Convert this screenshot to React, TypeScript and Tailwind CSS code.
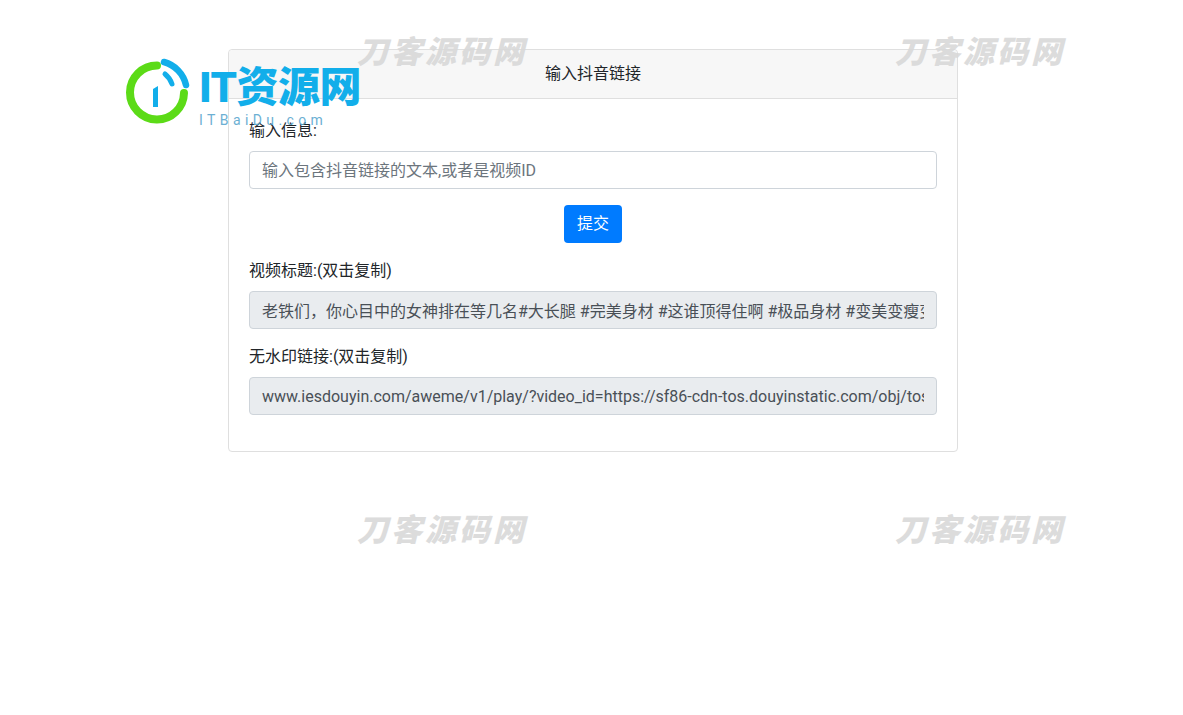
const cjk = "font-['Roboto','Noto_Sans_CJK_SC',sans-serif]"

const titleText = '老铁们，你心目中的女神排在等几名#大长腿 #完美身材 #这谁顶得住啊 #极品身材 #变美变瘦变自信'
const linkText = 'www.iesdouyin.com/aweme/v1/play/?video_id=https://sf86-cdn-tos.douyinstatic.com/obj/tos-cn-ve-15/video/tos/cn'

function Watermark({ className }: { className: string }) {
  return (
    <div className={`absolute whitespace-nowrap text-[31px] leading-[30px] font-black italic tracking-[3px] text-[#d9d9d9] opacity-90 ${className}`}>
      刀客源码网
    </div>
  )
}

function Logo() {
  return (
    <div className="absolute left-[126px] top-[58px] flex items-start">
      <svg width="64" height="66" viewBox="0 0 64 66" fill="none" className="shrink-0">
        <path d="M31 7.5 A27 27 0 1 0 58 35" stroke="#5cdb17" strokeWidth="8" strokeLinecap="round" />
        <path d="M38 4 A31 31 0 0 1 60 27" stroke="#12aeea" strokeWidth="6.5" strokeLinecap="round" />
        <path d="M39 16 A22 22 0 0 1 46 26" stroke="#12aeea" strokeWidth="5" strokeLinecap="round" />
        <path d="M27 31 L32 28 V49 H27 Z" fill="#12aeea" />
      </svg>
      <div className="ml-[9px] mt-[8px]">
        <div className="text-[42px] leading-[44px] font-black tracking-[-0.5px] text-[#12aeea] whitespace-nowrap">IT资源网</div>
        <div className="mt-[2px] text-[14px] leading-[16px] tracking-[4.4px] text-[#5ba8cf] opacity-90 whitespace-nowrap">ITBaiDu.com</div>
      </div>
    </div>
  )
}

function Field({ label, value, placeholder, readOnly }: { label: string; value?: string; placeholder?: string; readOnly?: boolean }) {
  return (
    <div>
      <label className="block mb-2 text-base leading-6 text-[#212529]">{label}</label>
      <input
        type="text"
        readOnly={readOnly}
        defaultValue={value}
        placeholder={placeholder}
        className={`block w-full h-[38px] px-3 py-1.5 text-base leading-6 text-[#495057] border border-[#ced4da] rounded placeholder:text-[#6c757d] outline-none ${readOnly ? 'bg-[#e9ecef]' : 'bg-white'}`}
      />
    </div>
  )
}

export default function App() {
  return (
    <main className={`relative min-h-[715px] bg-white overflow-hidden ${cjk}`}>
      <div className="flex justify-center pl-[3px] pt-[49px]">
        <section className="w-[730px] h-[403px] bg-white border border-[#dfdfdf] rounded">
          <header className="h-[49px] flex items-center justify-center bg-[#f7f7f7] border-b border-[#dfdfdf] text-base text-[#212529] rounded-t">
            输入抖音链接
          </header>
          <div className="px-5 pt-5">
            <Field label="输入信息:" placeholder="输入包含抖音链接的文本,或者是视频ID" />
            <div className="flex justify-center mt-4 mb-4">
              <button className="h-[38px] px-[13px] bg-[#007bff] text-white text-base rounded">提交</button>
            </div>
            <Field label="视频标题:(双击复制)" value={titleText} readOnly />
            <div className="h-4" />
            <Field label="无水印链接:(双击复制)" value={linkText} readOnly />
          </div>
        </section>
      </div>
      <Watermark className="left-[357px] top-[38px]" />
      <Watermark className="left-[895px] top-[38px]" />
      <Watermark className="left-[357px] top-[516px]" />
      <Watermark className="left-[895px] top-[516px]" />
      <Logo />
    </main>
  )
}
